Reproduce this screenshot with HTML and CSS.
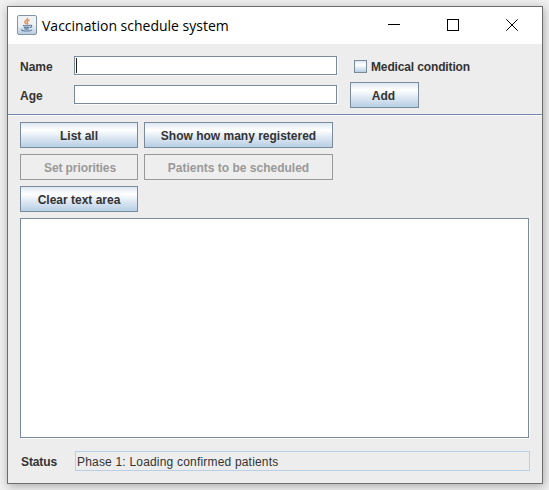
FILE: index.html
```html
<!DOCTYPE html>
<html lang="en">
<head>
<meta charset="utf-8">
<title>Vaccination schedule system</title>
<link rel="stylesheet" href="styles.css">
</head>
<body>
<main class="window">
  <header class="titlebar">
    <svg class="app-icon" width="20" height="20" viewBox="0 0 20 20" fill="none">
      <defs><linearGradient id="tile" x1="0" y1="0" x2="0" y2="1"><stop offset="0" stop-color="#f1f4f7"/><stop offset=".5" stop-color="#edf1f5"/><stop offset="1" stop-color="#b5cade"/></linearGradient></defs>
      <rect x=".5" y=".5" width="19" height="19" rx="1.5" fill="url(#tile)" stroke="#8296a8"/>
      <path d="M10.300 3c1.200 1.500-2.900 2.600-2.600 4.200.2 1 1.500 1.300 1.600 2.300M12.600 5c-2.700 1-3 1.800-2.200 2.700.6.7.3 1.300-.5 1.800" stroke="#e0934f" stroke-width="1.400"/>
      <path d="M6 10.300c1.500.8 5.300.7 7 0M6.700 12.100c1.500.6 4.300.6 5.700 0M7.200 13.700c1.300.5 3.400.5 4.700 0M13.200 10.200c2.300-.3 2 2-.3 2.400M5.600 14.500c-2.700 1 1.500 1.600 4.500 1.500 2.600-.1 4.500-.5 4.700-1.200" stroke="#54789b" stroke-width="1.100"/>
    </svg>
    <h1 class="title">Vaccination schedule system</h1>
    <div class="controls">
      <svg width="12" height="12" viewBox="0 0 12 12" stroke="#000"><path d="M0 5.500h12"/></svg>
      <svg width="12" height="12" viewBox="0 0 12 12" stroke="#000" fill="none"><rect x=".5" y=".5" width="11" height="11"/></svg>
      <svg width="12" height="12" viewBox="0 0 12 12" stroke="#000"><path d="M.3.3l11.400 11.400M11.700.3L.3 11.700"/></svg>
    </div>
  </header>
  <section class="form">
    <span class="label">Name</span>
    <div class="field"><span class="caret"></span></div>
    <div class="check"><span class="box"></span><span class="medical">Medical condition</span></div>
    <span class="label">Age</span>
    <div class="field age-field"></div>
    <button class="button add">Add</button>
  </section>
  <section class="actions">
    <button class="button">List all</button>
    <button class="button">Show how many registered</button>
    <button class="button tight" disabled>Set priorities</button>
    <button class="button" disabled>Patients to be scheduled</button>
    <button class="button">Clear text area</button>
  </section>
  <div class="output"></div>
  <footer class="status">
    <span class="status-label">Status</span>
    <div class="status-field">Phase 1: Loading confirmed patients</div>
  </footer>
</main>
</body>
</html>
```
FILE: styles.css
```css
* { box-sizing: border-box; }
body {
  margin: 0;
  padding: 6px 0 0 7px;
  height: 490px;
  overflow: hidden;
  background: #f0f0f0;
  font: bold 12px/14px "Liberation Sans", Arial, sans-serif;
  color: #333;
}
.window {
  width: 536px;
  height: 478px;
  border: 1px solid #6d6d6d;
  background: #ededed;
  box-shadow: 1px 2px 9px rgba(0, 0, 0, .3);
}
.titlebar {
  display: flex;
  align-items: center;
  height: 37px;
  padding: 0 24px 0 9px;
  background: #fff;
}
.app-icon { margin-bottom: 2px; }
.title {
  margin: 0 0 0 5px;
  font: 14px/20px "Open Sans", "Noto Sans", sans-serif;
  color: #000;
  white-space: nowrap;
}
.controls { display: flex; gap: 47px; margin: 0 0 2px auto; }
.controls svg { display: block; }
.form {
  display: grid;
  grid-template-columns: 54px 263px 1fr;
  grid-template-rows: 19px 26px;
  row-gap: 7px;
  height: 72px;
  padding: 12px 12px 0;
  border-bottom: 1px solid #fff;
  box-shadow: inset 0 -1px 0 #7388b0;
  align-items: center;
}
.label { padding-top: 2px; }
.field {
  height: 19px;
  padding: 1px;
  border: 1px solid #7a8a99;
  background: #fff;
  box-shadow: 1px 1px 0 #fafafa;
}
.age-field { align-self: start; margin-top: 3px; }
.caret { display: block; width: 1px; height: 15px; background: #222; }
.check { display: flex; align-items: center; gap: 4px; padding: 2px 0 0 17px; }
.medical { letter-spacing: -.14px; }
.box {
  width: 13px;
  height: 13px;
  border: 1px solid #7a8a99;
  background: linear-gradient(#dde8f3, #fff 35%, #b8cfe5);
}
.button {
  height: 26px;
  padding: 1px 0 0;
  border: 1px solid #7a8a99;
  border-radius: 0;
  background: linear-gradient(#dde8f3, #fff 30%, #dde8f3 60%, #b8cfe5);
  font: inherit;
  color: #333;
  white-space: nowrap;
}
.button:disabled {
  border-color: #999;
  background: #eee;
  color: #999;
}
.tight { letter-spacing: -.1px; padding-left: 2px; }
.add { width: 69px; margin-left: 13px; padding-right: 2px; }
.actions {
  display: grid;
  grid-template-columns: 118px 189px;
  gap: 6px;
  padding: 6px 12px;
}
.output {
  width: 509px;
  height: 220px;
  margin-left: 12px;
  border: 1px solid #7a8a99;
  background: #fff;
  box-shadow: 1px 1px 0 #fafafa;
}
.status {
  display: flex;
  align-items: center;
  margin: 13px 12px 0 13px;
}
.status-label { width: 54px; padding-top: 2px; letter-spacing: -.1px; }
.status-field {
  width: 455px;
  height: 20px;
  padding: 3px 1px 0;
  border: 1px solid #b8cfe5;
  font-weight: normal;
  letter-spacing: .19px;
}
```
